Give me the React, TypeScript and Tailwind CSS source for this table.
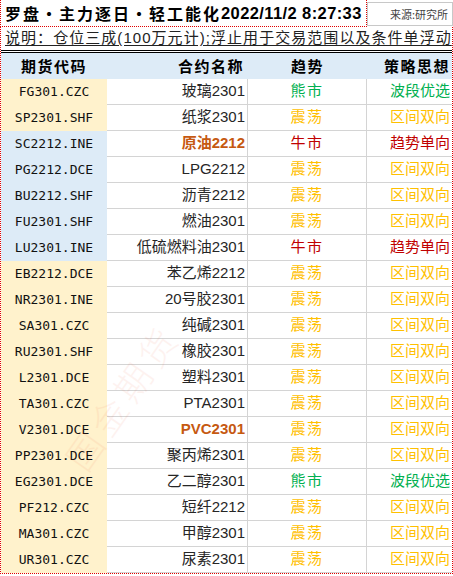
import React from "react";

type Row = {
  code: string;
  name: string;
  trend: "熊市" | "震荡" | "牛市";
  blue?: boolean;
  hot?: boolean;
};

const rows: Row[] = [
  { code: "FG301.CZC", name: "玻璃2301", trend: "熊市" },
  { code: "SP2301.SHF", name: "纸浆2301", trend: "震荡" },
  { code: "SC2212.INE", name: "原油2212", trend: "牛市", blue: true, hot: true },
  { code: "PG2212.DCE", name: "LPG2212", trend: "震荡", blue: true },
  { code: "BU2212.SHF", name: "沥青2212", trend: "震荡", blue: true },
  { code: "FU2301.SHF", name: "燃油2301", trend: "震荡", blue: true },
  { code: "LU2301.INE", name: "低硫燃料油2301", trend: "牛市", blue: true },
  { code: "EB2212.DCE", name: "苯乙烯2212", trend: "震荡" },
  { code: "NR2301.INE", name: "20号胶2301", trend: "震荡" },
  { code: "SA301.CZC", name: "纯碱2301", trend: "震荡" },
  { code: "RU2301.SHF", name: "橡胶2301", trend: "震荡" },
  { code: "L2301.DCE", name: "塑料2301", trend: "震荡" },
  { code: "TA301.CZC", name: "PTA2301", trend: "震荡" },
  { code: "V2301.DCE", name: "PVC2301", trend: "震荡", hot: true },
  { code: "PP2301.DCE", name: "聚丙烯2301", trend: "震荡" },
  { code: "EG2301.DCE", name: "乙二醇2301", trend: "熊市" },
  { code: "PF212.CZC", name: "短纤2212", trend: "震荡" },
  { code: "MA301.CZC", name: "甲醇2301", trend: "震荡" },
  { code: "UR301.CZC", name: "尿素2301", trend: "震荡" },
];

const plan = {
  熊市: { text: "波段优选", color: "text-[#00b050]" },
  震荡: { text: "区间双向", color: "text-[#ffc000]" },
  牛市: { text: "趋势单向", color: "text-[#c00000]" },
};

const sans = "font-['Liberation_Sans','Noto_Sans_CJK_SC',sans-serif]";

export default function App() {
  return (
    <div className={`w-[453px] bg-white text-[#262626] ${sans}`}>
      {/* title */}
      <div className="flex h-[27px]">
        <div className="flex w-[367px] items-center whitespace-nowrap border-b border-l border-r border-dotted border-[#e00000] pl-[4px] font-bold text-black">
          <span className="font-['Noto_Sans_CJK_SC',sans-serif] text-[16px] tracking-[2px]">罗盘•主力逐日•轻工能化</span>
          <span className="font-['Liberation_Sans',sans-serif] text-[16.5px] tracking-[0.4px]">2022/11/2 8:27:33</span>
        </div>
        <div className="mb-[1px] mt-[2px] flex flex-1 items-center justify-end border border-[#c8c8c8] pr-[4px] font-['Noto_Sans_CJK_SC',serif] text-[11px] text-[#444]">
          来源:研究所
        </div>
      </div>

      <div className="relative overflow-hidden border-x border-b border-dotted border-[#e00000]">
        {/* note */}
        <div className="flex h-[26px] items-center whitespace-nowrap border-b-[3px] border-double border-black pl-[4px] text-[15px] tracking-[1.05px] text-[#222] underline underline-offset-[2px]">
          说明：仓位三成(100万元计);浮止用于交易范围以及条件单浮动
        </div>

        {/* header */}
        <div className="grid h-[26px] grid-cols-[106px_141px_119px_85px] bg-[#ddebf7] font-['Noto_Sans_CJK_SC',serif] text-[15px] font-bold tracking-[1.5px] text-black">
          <div className="flex items-center justify-center">期货代码</div>
          <div className="flex items-center justify-end pr-[4px]">合约名称</div>
          <div className="flex items-center justify-center">趋势</div>
          <div className="flex items-center justify-end pr-[2px]">策略思想</div>
        </div>

        {/* rows */}
        {rows.map((r) => (
          <div key={r.code} className="grid h-[26px] grid-cols-[106px_141px_119px_85px] text-[15px]">
            <div
              className={`flex items-center justify-center font-['DejaVu_Sans_Mono',monospace] text-[13px] font-medium text-[#111] ${
                r.blue ? "bg-[#ddebf7]" : "bg-[#fff2cc]"
              }`}
            >
              {r.code}
            </div>
            <div
              className={`flex items-center justify-end border-b border-r border-[#d4d4d4] pr-[2px] ${
                r.hot ? "font-bold text-[#c65911]" : ""
              }`}
            >
              {r.name}
            </div>
            <div
              className={`flex items-center justify-center border-b border-r border-[#d4d4d4] tracking-[1.5px] ${plan[r.trend].color}`}
            >
              {r.trend}
            </div>
            <div className={`flex items-center justify-end border-b border-[#d4d4d4] pr-[2px] ${plan[r.trend].color}`}>
              {plan[r.trend].text}
            </div>
          </div>
        ))}

        {/* watermark */}
        <div className="pointer-events-none absolute left-[36px] top-[342px] -rotate-[55deg] whitespace-nowrap font-['Noto_Sans_CJK_SC',serif] text-[36px] font-light tracking-[6px] text-[#f05030] opacity-[0.07]">
          国金期货
        </div>
      </div>
    </div>
  );
}
